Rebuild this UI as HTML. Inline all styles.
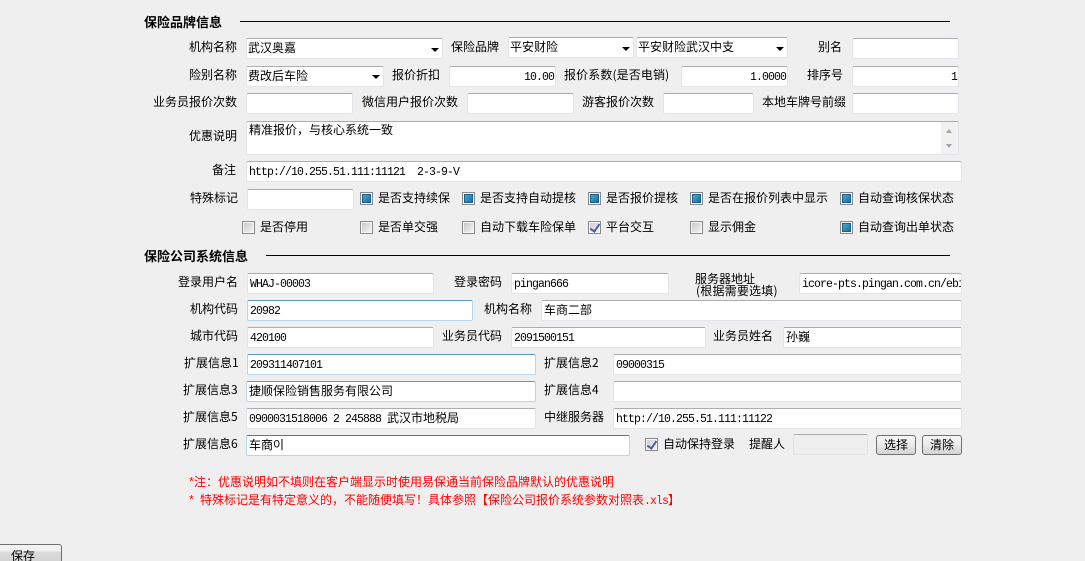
<!DOCTYPE html>
<html style="overflow:hidden;height:561px"><head><meta charset="utf-8"><style>
html,body{margin:0;padding:0}
body{width:1085px;height:561px;overflow:hidden;background:#efefef;position:relative;font:12px/20px "WenQuanYi Zen Hei","Noto Sans CJK SC",sans-serif;color:#000}
div{position:absolute;box-sizing:border-box;white-space:nowrap}
i{font-style:normal;font-family:"Liberation Mono",monospace;font-size:11.5px;letter-spacing:-.9px}
.t{font-weight:bold;font-size:13px;left:144px}
.h{height:1px;background:#000}
.l{height:20px;margin-top:-1px}
.f{background:#fff;border:1px solid #e3e4ea;border-top-color:#abadb3;border-radius:2px;padding-left:2px;line-height:17px;overflow:hidden}
.b{border-color:#b5d7ee;border-top-color:#5c9bc9}
.r{text-align:right;padding:0 1px 0 0}
.a{width:0;height:0;border:4px solid transparent;border-top:4px solid #000;border-bottom:0}
.c{width:13px;height:13px;border:1px solid #8a8a8a;background:#f6f6f6}
.c:before{content:"";position:absolute;left:1px;top:1px;width:9px;height:9px;background:linear-gradient(135deg,#c8c8c8,#f4f4f4)}
.k:before{background:linear-gradient(135deg,#55aed2,#0f6a9c);box-shadow:inset 0 0 0 1px #1d5f86}
.v:before{background:linear-gradient(135deg,#cfcfd4,#f2f2f4)}
.v:after{content:"";position:absolute;left:3px;top:0;width:4px;height:8px;border:solid #4a5fa8;border-width:0 2px 2px 0;transform:rotate(35deg)}
.btn{height:20px;border:1px solid #707070;border-radius:3px;background:linear-gradient(#f6f6f6 0,#ececec 45%,#d2d2d2 100%);text-align:center;line-height:18px}
.red{color:#f00;left:188px}
</style></head><body>

<div class="t" style="top:12px">保险品牌信息</div>
<div class="h" style="left:240px;top:21px;width:710px"></div>

<div class="l" style="left:189px;top:38px">机构名称</div>
<div class="f" style="left:246px;top:38px;width:197px;height:21px;padding-left:1px">武汉奥嘉</div>
<div class="a" style="left:431px;top:48px"></div>
<div class="l" style="left:451px;top:38px">保险品牌</div>
<div class="f" style="left:508px;top:37px;width:126px;height:21px;padding-left:1px">平安财险</div>
<div class="a" style="left:622px;top:47px"></div>
<div class="f" style="left:636px;top:37px;width:152px;height:21px;padding-left:1px">平安财险武汉中支</div>
<div class="a" style="left:776px;top:47px"></div>
<div class="l" style="left:818px;top:38px">别名</div>
<div class="f" style="left:852px;top:38px;width:107px;height:21px"></div>

<div class="l" style="left:189px;top:66px">险别名称</div>
<div class="f" style="left:246px;top:66px;width:138px;height:21px;padding-left:1px">费改后车险</div>
<div class="a" style="left:372px;top:75px"></div>
<div class="l" style="left:392px;top:66px">报价折扣</div>
<div class="f r" style="left:449px;top:66px;width:107px;height:21px"><i>10.00</i></div>
<div class="l" style="left:564px;top:66px;letter-spacing:.12px">报价系数(是否电销)</div>
<div class="f r" style="left:681px;top:66px;width:107px;height:21px"><i>1.0000</i></div>
<div class="l" style="left:807px;top:66px">排序号</div>
<div class="f r" style="left:852px;top:66px;width:107px;height:21px"><i>1</i></div>

<div class="l" style="left:153px;top:93px">业务员报价次数</div>
<div class="f" style="left:246px;top:93px;width:107px;height:21px"></div>
<div class="l" style="left:362px;top:93px">微信用户报价次数</div>
<div class="f" style="left:467px;top:93px;width:107px;height:21px"></div>
<div class="l" style="left:582px;top:93px">游客报价次数</div>
<div class="f" style="left:663px;top:93px;width:91px;height:21px"></div>
<div class="l" style="left:762px;top:93px">本地车牌号前缀</div>
<div class="f" style="left:852px;top:93px;width:107px;height:21px"></div>

<div class="l" style="left:189px;top:127px">优惠说明</div>
<div class="f" style="left:246px;top:121px;width:713px;height:34px;line-height:16px">精准报价，与核心系统一致</div>
<div style="left:941px;top:122px;width:17px;height:32px;background:#f1f1f1"></div>
<div style="left:946px;top:129px;width:0;height:0;border:3.5px solid transparent;border-bottom:4px solid #a5a5a5;border-top:0"></div>
<div style="left:946px;top:144px;width:0;height:0;border:3.5px solid transparent;border-top:4px solid #a5a5a5;border-bottom:0"></div>

<div class="l" style="left:212px;top:161px">备注</div>
<div class="f" style="left:246px;top:161px;width:716px;height:21px"><i>http://10.255.51.111:11121&nbsp;&nbsp;2-3-9-V</i></div>

<div class="l" style="left:190px;top:189px">特殊标记</div>
<div class="f" style="left:247px;top:189px;width:107px;height:21px"></div>

<div class="c k" style="left:360px;top:192px"></div><div class="l" style="left:378px;top:189px">是否支持续保</div>
<div class="c k" style="left:462px;top:192px"></div><div class="l" style="left:480px;top:189px">是否支持自动提核</div>
<div class="c k" style="left:588px;top:192px"></div><div class="l" style="left:606px;top:189px">是否报价提核</div>
<div class="c k" style="left:690px;top:192px"></div><div class="l" style="left:708px;top:189px">是否在报价列表中显示</div>
<div class="c k" style="left:840px;top:192px"></div><div class="l" style="left:858px;top:189px">自动查询核保状态</div>

<div class="c" style="left:242px;top:221px"></div><div class="l" style="left:260px;top:218px">是否停用</div>
<div class="c" style="left:360px;top:221px"></div><div class="l" style="left:378px;top:218px">是否单交强</div>
<div class="c" style="left:462px;top:221px"></div><div class="l" style="left:480px;top:218px">自动下载车险保单</div>
<div class="c v" style="left:588px;top:221px"></div><div class="l" style="left:606px;top:218px">平台交互</div>
<div class="c" style="left:690px;top:221px"></div><div class="l" style="left:708px;top:218px">显示佣金</div>
<div class="c k" style="left:840px;top:221px"></div><div class="l" style="left:858px;top:218px">自动查询出单状态</div>

<div class="t" style="top:246px">保险公司系统信息</div>
<div class="h" style="left:266px;top:255px;width:684px"></div>

<div class="l" style="left:178px;top:273px">登录用户名</div>
<div class="f" style="left:247px;top:273px;width:187px;height:21px"><i>WHAJ-00003</i></div>
<div class="l" style="left:454px;top:273px">登录密码</div>
<div class="f" style="left:511px;top:273px;width:158px;height:21px"><i>pingan666</i></div>
<div class="l" style="left:695px;top:270px">服务器地址</div>
<div class="l" style="left:696px;top:282px;letter-spacing:.2px">(根据需要选填)</div>
<div class="f" style="left:799px;top:273px;width:163px;height:21px"><i>icore-pts.pingan.com.cn/ebiz</i></div>

<div class="l" style="left:190px;top:300px">机构代码</div>
<div class="f b" style="left:247px;top:300px;width:226px;height:21px"><i>20982</i></div>
<div class="l" style="left:484px;top:300px">机构名称</div>
<div class="f" style="left:541px;top:300px;width:421px;height:21px">车商二部</div>

<div class="l" style="left:190px;top:327px">城市代码</div>
<div class="f" style="left:247px;top:327px;width:187px;height:21px"><i>420100</i></div>
<div class="l" style="left:442px;top:327px">业务员代码</div>
<div class="f" style="left:511px;top:327px;width:195px;height:21px"><i>2091500151</i></div>
<div class="l" style="left:713px;top:327px">业务员姓名</div>
<div class="f" style="left:783px;top:327px;width:179px;height:21px">孙巍</div>

<div class="l" style="left:184px;top:354px">扩展信息1</div>
<div class="f b" style="left:247px;top:354px;width:289px;height:21px"><i>209311407101</i></div>
<div class="l" style="left:544px;top:354px">扩展信息2</div>
<div class="f" style="left:613px;top:354px;width:349px;height:21px"><i>09000315</i></div>

<div class="l" style="left:183px;top:381px">扩展信息3</div>
<div class="f b" style="left:246px;top:381px;width:290px;height:21px">捷顺保险销售服务有限公司</div>
<div class="l" style="left:544px;top:381px">扩展信息4</div>
<div class="f" style="left:613px;top:381px;width:349px;height:21px"></div>

<div class="l" style="left:183px;top:408px">扩展信息5</div>
<div class="f" style="left:246px;top:408px;width:290px;height:21px"><i>0900031518006 2 245888 </i>武汉市地税局</div>
<div class="l" style="left:544px;top:408px">中继服务器</div>
<div class="f" style="left:613px;top:408px;width:349px;height:21px"><i>http://10.255.51.111:11122</i></div>

<div class="l" style="left:183px;top:435px">扩展信息6</div>
<div class="f b" style="left:246px;top:435px;width:384px;height:21px;border-top-color:#3f7fb5;font-family:'WenQuanYi Zen Hei','Noto Sans CJK KR',sans-serif">车商이</div>
<div class="c v" style="left:645px;top:438px"></div><div class="l" style="left:663px;top:435px">自动保持登录</div>
<div class="l" style="left:749px;top:435px">提醒人</div>
<div class="f" style="left:793px;top:434px;width:75px;height:21px;background:#efefef"></div>
<div class="btn" style="left:876px;top:435px;width:40px">选择</div>
<div class="btn" style="left:922px;top:435px;width:40px">清除</div>

<div class="red" style="top:472px"><i>*</i>注：优惠说明如不填则在客户端显示时使用易保通当前保险品牌默认的优惠说明</div>
<div class="red" style="top:490px"><i>*&nbsp;</i>特殊标记是有特定意义的，不能随便填写！具体参照【保险公司报价系统参数对照表<i>.xls</i>】</div>

<div class="btn" style="left:-6px;top:544px;width:68px;height:17px;border-bottom:0;border-radius:3px 3px 0 0;text-align:left;padding-left:16px;line-height:21px;background:linear-gradient(#f4f4f4 0,#efefef 40%,#dcdcdc 42%,#d4d4d4 100%)">保存</div>
</body></html>
